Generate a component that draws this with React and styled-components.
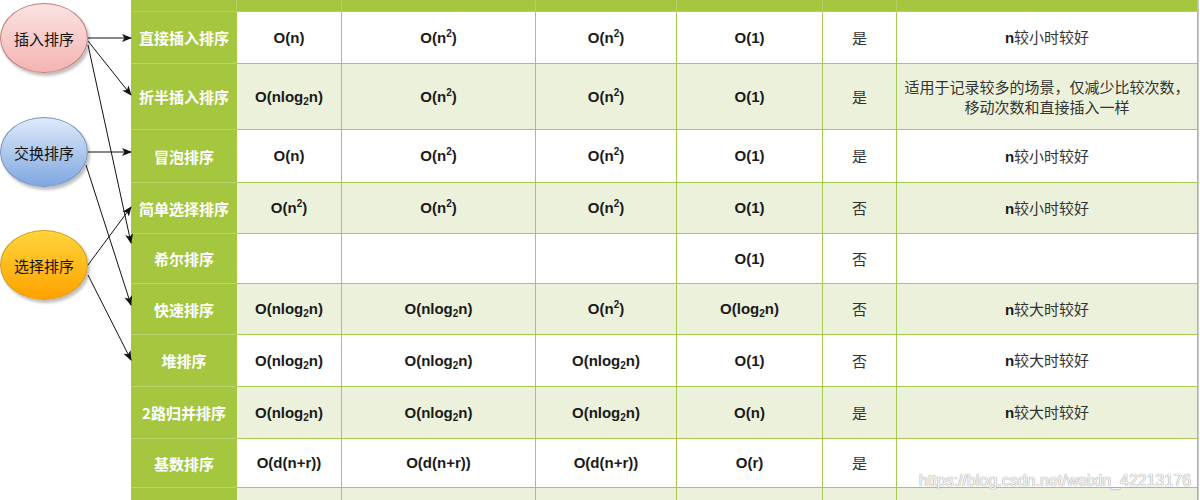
import React from "react";
import styled, { createGlobalStyle } from "styled-components";

const GlobalStyle = createGlobalStyle`
  html, body {
    margin: 0;
    padding: 0;
    background: #ffffff;
  }
  body {
    font-family: "Liberation Sans", "Noto Sans CJK SC", sans-serif;
  }
`;

const Page = styled.div`
  position: relative;
  width: 1200px;
  height: 500px;
  overflow: hidden;
  display: flex;
  background: #fff;
`;

const Diagram = styled.div`
  position: relative;
  width: 131px;
  flex: none;
  height: 500px;
`;

const Node = styled.div`
  position: absolute;
  left: ${(p) => p.x}px;
  top: ${(p) => p.y}px;
  width: 88px;
  height: 70px;
  border-radius: 50%;
  box-sizing: border-box;
  border: 1px solid ${(p) => p.stroke};
  background: linear-gradient(to bottom, ${(p) => p.from}, ${(p) => p.to});
  box-shadow: 2px 3px 3px rgba(0, 0, 0, 0.25);
  display: flex;
  align-items: center;
  justify-content: center;
  font-family: "Noto Sans CJK SC", sans-serif;
  font-size: 15px;
  color: #111;
`;

const Arrows = styled.svg`
  position: absolute;
  left: 0;
  top: 0;
  overflow: visible;
`;

const Table = styled.table`
  width: 1067px;
  flex: none;
  border-collapse: separate;
  border-spacing: 0;
  table-layout: fixed;
  border-right: 1px solid #c9c9c9;
`;

const Row = styled.tr`
  height: ${(p) => p.h}px;
  background: ${(p) => (p.shade ? "#ebf1da" : "#ffffff")};
`;

const HeadCell = styled.td`
  padding: 0;
  background: #a5c63f;
  border-right: 1px solid #b4d060;
  border-bottom: 1px solid #b4d060;
`;

const NameCell = styled.td`
  padding: 0;
  background: #a5c63f;
  border-bottom: 1px solid #b8d46e;
  color: #ffffff;
  font-family: "Noto Sans CJK SC", sans-serif;
  font-weight: 700;
  font-size: 15px;
  text-align: center;
  white-space: nowrap;
`;

const Cell = styled.td`
  padding: 0 4px;
  border-right: 1px solid #a8c94f;
  border-bottom: 1px solid #a8c94f;
  text-align: center;
  font-family: ${(p) =>
    p.cjk ? '"Noto Sans CJK SC", sans-serif' : '"Liberation Sans", sans-serif'};
  font-weight: ${(p) => (p.cjk ? 400 : 700)};
  font-size: 15px;
  line-height: 20px;
  color: ${(p) => (p.cjk ? "#333" : "#1a1a1a")};
`;

const Bold = styled.span`
  font-family: "Liberation Sans", sans-serif;
  font-weight: 700;
  color: #1a1a1a;
`;

const Sup = styled.sup`
  font-size: 10px;
  vertical-align: 6px;
  line-height: 0;
`;

const Sub = styled.sub`
  font-size: 10px;
  vertical-align: -3px;
  line-height: 0;
`;

const Watermark = styled.div`
  position: absolute;
  left: 919px;
  top: 472px;
  font-family: "Liberation Sans", sans-serif;
  font-size: 16px;
  color: #f6f6f6;
  text-shadow: 0 0 1px #9a9a9a, 0 0 1px #9a9a9a;
  pointer-events: none;
`;

const N2 = () => (
  <>
    O(n<Sup>2</Sup>)
  </>
);
const NLog = () => (
  <>
    O(nlog<Sub>2</Sub>n)
  </>
);
const Log = () => (
  <>
    O(log<Sub>2</Sub>n)
  </>
);

const rows = [
  { name: "直接插入排序", h: 52, c: ["O(n)", <N2 />, <N2 />, "O(1)"], stable: "是", note: "small" },
  { name: "折半插入排序", h: 66, c: [<NLog />, <N2 />, <N2 />, "O(1)"], stable: "是", note: "long" },
  { name: "冒泡排序", h: 53, c: ["O(n)", <N2 />, <N2 />, "O(1)"], stable: "是", note: "small" },
  { name: "简单选择排序", h: 51, c: [<N2 />, <N2 />, <N2 />, "O(1)"], stable: "否", note: "small" },
  { name: "希尔排序", h: 50, c: ["", "", "", "O(1)"], stable: "否", note: "" },
  { name: "快速排序", h: 51, c: [<NLog />, <NLog />, <N2 />, <Log />], stable: "否", note: "big" },
  { name: "堆排序", h: 52, c: [<NLog />, <NLog />, <NLog />, "O(1)"], stable: "否", note: "big" },
  { name: "2路归并排序", h: 52, c: [<NLog />, <NLog />, <NLog />, "O(n)"], stable: "是", note: "big" },
  { name: "基数排序", h: 49, c: ["O(d(n+r))", "O(d(n+r))", "O(d(n+r))", "O(r)"], stable: "是", note: "" },
];

const Note = ({ kind }) => {
  if (kind === "small")
    return (
      <>
        <Bold>n</Bold>较小时较好
      </>
    );
  if (kind === "big")
    return (
      <>
        <Bold>n</Bold>较大时较好
      </>
    );
  if (kind === "long")
    return (
      <>
        适用于记录较多的场景，仅减少比较次数，
        <br />
        移动次数和直接插入一样
      </>
    );
  return null;
};

const widths = [106, 105, 194, 141, 146, 74, 301];

const arrows = [
  [88, 38, 131, 38],
  [88, 41, 131, 95],
  [88, 45, 131, 243],
  [88, 152, 131, 152],
  [86, 165, 131, 305],
  [88, 265, 131, 207],
  [88, 275, 131, 360],
];

function App() {
  return (
    <>
      <GlobalStyle />
      <Page>
        <Diagram>
          <Node x={0} y={3} from="#fbe3e2" to="#f3b4b2" stroke="#c27a78">
            插入排序
          </Node>
          <Node x={0} y={117} from="#dfeafb" to="#7fa7e0" stroke="#7593c0">
            交换排序
          </Node>
          <Node x={0} y={230} from="#ffd43a" to="#ffa200" stroke="#d29a16">
            选择排序
          </Node>
          <Arrows width="131" height="500">
            <defs>
              <marker
                id="head"
                markerWidth="10"
                markerHeight="8"
                refX="9"
                refY="4"
                orient="auto"
                markerUnits="userSpaceOnUse"
              >
                <path d="M0,0 L10,4 L0,8 L2.5,4 Z" fill="#111" />
              </marker>
            </defs>
            {arrows.map(([x1, y1, x2, y2], i) => (
              <line
                key={i}
                x1={x1}
                y1={y1}
                x2={x2}
                y2={y2}
                stroke="#111"
                strokeWidth="1"
                markerEnd="url(#head)"
              />
            ))}
          </Arrows>
        </Diagram>
        <Table>
          <colgroup>
            {widths.map((w, i) => (
              <col key={i} style={{ width: w }} />
            ))}
          </colgroup>
          <tbody>
            <Row h={12}>
              {widths.map((w, i) => (
                <HeadCell key={i} />
              ))}
            </Row>
            {rows.map((r, i) => (
              <Row key={r.name} h={r.h} shade={i % 2 === 1}>
                <NameCell>{r.name}</NameCell>
                {r.c.map((v, j) => (
                  <Cell key={j}>{v}</Cell>
                ))}
                <Cell cjk>{r.stable}</Cell>
                <Cell cjk>
                  <Note kind={r.note} />
                </Cell>
              </Row>
            ))}
            <Row h={20} shade>
              <NameCell />
              {widths.slice(1).map((w, i) => (
                <Cell key={i} />
              ))}
            </Row>
          </tbody>
        </Table>
        <Watermark>https://blog.csdn.net/weixin_42213176</Watermark>
      </Page>
    </>
  );
}

export default App;
